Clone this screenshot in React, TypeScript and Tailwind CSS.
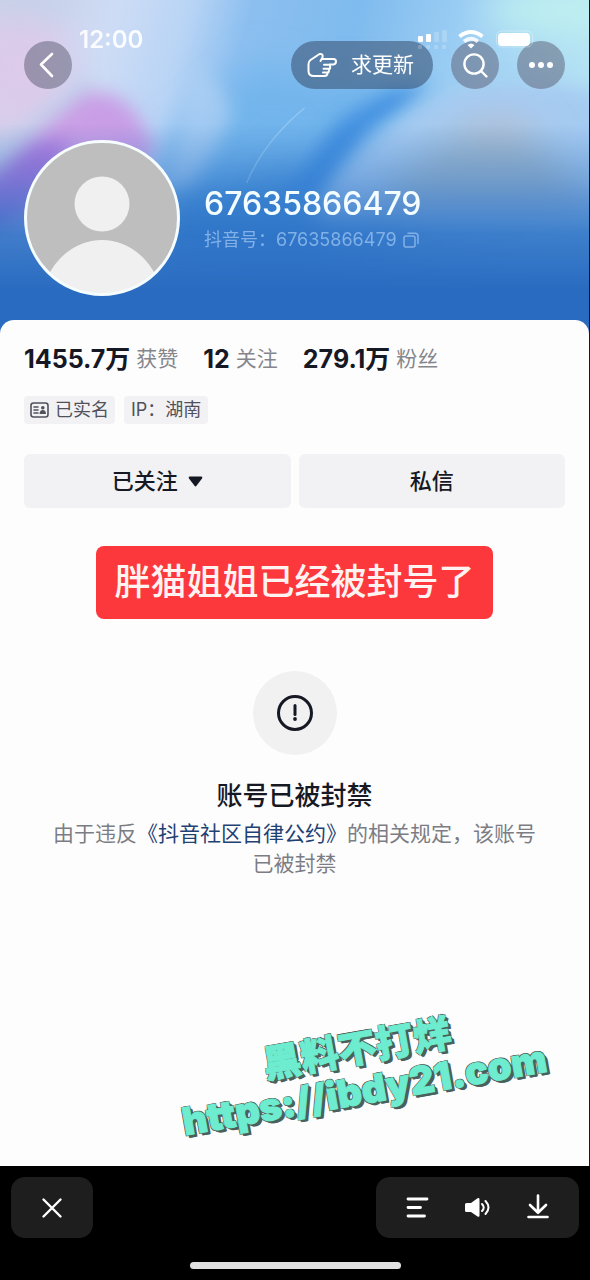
import React from "react";

const stats = [
  { value: "1455.7万", label: "获赞" },
  { value: "12", label: "关注" },
  { value: "279.1万", label: "粉丝" },
];

function CoverArt() {
  return (
    <svg
      className="absolute inset-0 h-full w-full"
      viewBox="0 0 590 344"
      preserveAspectRatio="none"
      aria-hidden="true"
    >
      <defs>
        <linearGradient id="base" x1="0" y1="0" x2="1" y2="0.15">
          <stop offset="0" stopColor="#d6cfea" />
          <stop offset="0.2" stopColor="#cddcf5" />
          <stop offset="0.32" stopColor="#b8d4f5" />
          <stop offset="0.42" stopColor="#8cbff0" />
          <stop offset="0.6" stopColor="#7fbbee" />
          <stop offset="0.8" stopColor="#9fd0f4" />
          <stop offset="1" stopColor="#b4e2f4" />
        </linearGradient>
        <linearGradient id="fade" x1="0" y1="0" x2="0" y2="1">
          <stop offset="0.36" stopColor="#2b6fc4" stopOpacity="0" />
          <stop offset="0.52" stopColor="#2b6fc4" stopOpacity="0.38" />
          <stop offset="0.68" stopColor="#2a6fc4" stopOpacity="0.86" />
          <stop offset="0.84" stopColor="#296bc0" stopOpacity="1" />
        </linearGradient>
        <filter id="soft" x="-50%" y="-50%" width="200%" height="200%">
          <feGaussianBlur stdDeviation="18" />
        </filter>
        <filter id="edge" x="-50%" y="-50%" width="200%" height="200%">
          <feGaussianBlur stdDeviation="9" />
        </filter>
      </defs>
      <rect width="590" height="344" fill="url(#base)" />
      <g filter="url(#soft)">
        <ellipse cx="20" cy="70" rx="50" ry="60" fill="#dccbea" />
        <ellipse cx="30" cy="0" rx="60" ry="14" fill="#bcd3e8" />
        <ellipse cx="575" cy="10" rx="90" ry="26" fill="#bff0f0" />
        <path d="M150 190 L170 140 L220 100 L260 60 L300 80 L420 80 L400 240 L140 240Z" fill="#72b5ec" />
        <path d="M160 250 L170 190 L300 160 L330 250Z" fill="#4a96dc" />
      </g>
      <g filter="url(#edge)">
        <path d="M-20 160 L84 78 L98 84 L20 160 L-20 190Z" fill="#bdcdea" opacity="0.8" />
        <path d="M-20 190 L20 148 L86 92 Q120 90 138 116 L156 150 L110 200 L-20 240Z" fill="#c98fe2" opacity="0.8" />
        <path d="M-20 184 L30 144 L70 140 L40 200 L-20 240Z" fill="#b078de" />
        <path d="M160 190 Q188 130 190 66 Q226 84 232 112 Q220 150 186 190Z" fill="#b0d0f4" opacity="0.7" />
        <path d="M276 200 L340 120 L390 92 L430 84 L370 130 L318 200Z" fill="#4390e0" />
      </g>
      <g filter="url(#edge)">
        <path d="M322 200 Q374 124 450 92 Q530 70 620 96 L620 220 L318 220Z" fill="#a6cbf1" />
      </g>
      <g filter="url(#soft)">
        <path d="M375 210 Q420 136 490 130 Q556 132 590 210Z" fill="#9fb8cb" />
        <ellipse cx="500" cy="128" rx="36" ry="10" fill="#b9bfd4" />
      </g>
      <path d="M247 183 Q264 142 305 108" fill="none" stroke="#a9d5f5" strokeWidth="1.500" opacity="0.55" />
      <rect width="590" height="344" fill="url(#fade)" />
    </svg>
  );
}

function StatusBar() {
  return (
    <div className="pointer-events-none absolute inset-x-0 top-7 flex h-6 items-center justify-between pl-[79px] pr-[54px] text-white">
      <time className="text-[24px] font-semibold leading-6 opacity-90">12:00</time>
      <svg width="118" height="24" viewBox="0 0 118 24" fill="#fff" aria-hidden="true">
        <rect x="1" y="8" width="5" height="6" rx="1" />
        <rect x="9" y="6" width="5" height="8" rx="1" />
        <g opacity="0.2">
          <rect x="17" y="4" width="5" height="10" rx="1" />
          <rect x="25" y="2" width="5" height="12" rx="1" />
          <rect x="1" y="17" width="4" height="4" rx="1" />
          <rect x="9" y="17" width="4" height="4" rx="1" />
          <rect x="17" y="17" width="4" height="4" rx="1" />
          <rect x="25" y="17" width="4" height="4" rx="1" />
        </g>
        <g fill="none" stroke="#fff" strokeWidth="4">
          <path d="M42.500 8.500 Q54 -0.500 65.500 8.500" />
          <path d="M47 13.500 Q54 8 61 13.500" opacity="0.85" />
        </g>
        <path d="M50.500 17 Q54 14 57.500 17 L54 20.500Z" />
        <rect x="79.500" y="3" width="36" height="16" rx="5" fill="none" stroke="#fff" opacity="0.3" />
        <rect x="81" y="5" width="32" height="13" rx="4" />
      </svg>
    </div>
  );
}

function RoundButton({ label, children }: { label: string; children: React.ReactNode }) {
  return (
    <button
      type="button"
      aria-label={label}
      className="flex size-12 items-center justify-center rounded-full bg-[#5a5c72]/50 text-white"
    >
      {children}
    </button>
  );
}

function TopBar() {
  return (
    <div className="flex items-center justify-between">
      <RoundButton label="返回">
        <svg width="28" height="28" viewBox="0 0 28 28" fill="none" stroke="currentColor" strokeWidth="2.600" strokeLinecap="round" strokeLinejoin="round">
          <path d="M18 3 L7 13.500 L18 25" />
        </svg>
      </RoundButton>
      <div className="flex items-center gap-[18px]">
        <button
          type="button"
          className="flex h-12 items-center gap-[14px] rounded-full bg-[#3d5678]/60 pl-4 pr-[19px] text-[21px] text-white"
        >
          <svg width="30" height="26" viewBox="0 0 30 26" fill="none" stroke="currentColor" strokeWidth="2" strokeLinecap="round" strokeLinejoin="round" aria-hidden="true">
            <path d="M13.500 9 L15.500 5.500 Q16.500 1.500 12.500 2 L3.500 8 Q1.500 9.500 1.500 12 V19 Q1.500 24 7 24 H17.500 Q20.500 24 20.500 21 Q22.500 20 21.800 17.500 Q23.800 16.500 23 14 V12.500 H26.500 Q29 12 29 9.500 Q29 7 26.500 7 H14.800" />
            <path d="M23 12.800 H17 M22 16.800 H16.500 M20.500 20.500 H16" />
          </svg>
          求更新
        </button>
        <RoundButton label="搜索">
          <svg width="28" height="28" viewBox="0 0 28 28" fill="none" stroke="currentColor" strokeWidth="2.400" strokeLinecap="round">
            <circle cx="13" cy="13" r="9.600" />
            <path d="M20 20 L25.500 25.500" />
          </svg>
        </RoundButton>
        <RoundButton label="更多">
          <svg width="26" height="8" viewBox="0 0 26 8" fill="currentColor">
            <circle cx="4" cy="4" r="3" />
            <circle cx="13" cy="4" r="3" />
            <circle cx="22" cy="4" r="3" />
          </svg>
        </RoundButton>
      </div>
    </div>
  );
}

function Profile() {
  return (
    <div className="mt-[51px] flex items-center gap-6">
      <svg className="size-[156px] shrink-0" viewBox="0 0 156 156" role="img" aria-label="头像">
        <defs>
          <clipPath id="face">
            <circle cx="78" cy="78" r="76" />
          </clipPath>
        </defs>
        <circle cx="78" cy="78" r="76" fill="#bebebe" />
        <g clipPath="url(#face)" fill="#f0f0f0">
          <circle cx="78" cy="64" r="27.500" />
          <path d="M22 140 C34 113 56 100 78 100 C100 100 122 113 134 140 V160 H22Z" />
        </g>
        <circle cx="78" cy="78" r="76.500" fill="none" stroke="#f5fdff" strokeWidth="3" />
      </svg>
      <div>
        <h1 className="text-[32px] font-medium leading-10 text-[#f3fcff]">67635866479</h1>
        <div className="mt-1 flex items-center gap-[6px] text-[18px] leading-6 text-[#82b1e8]">
          <p>抖音号：67635866479</p>
          <button type="button" aria-label="复制抖音号">
            <svg className="block" width="16" height="16" viewBox="0 0 16 16" fill="none" stroke="currentColor" strokeWidth="1.500" strokeLinejoin="round" strokeLinecap="round">
              <rect x="1" y="4" width="11" height="11" rx="2" />
              <path d="M5 1.200 H12 Q15 1.200 15 4.200 V11.500" />
            </svg>
          </button>
        </div>
      </div>
    </div>
  );
}

function Tags() {
  return (
    <div className="mt-[22px] flex gap-[9px] text-[18px] leading-7 text-[#50515b]">
      <span className="flex items-center gap-[6px] rounded-sm bg-[#f2f2f5] px-[6px]">
        <svg width="19" height="16" viewBox="0 0 19 16" fill="none" stroke="currentColor" strokeWidth="1.600" strokeLinecap="round" aria-hidden="true">
          <rect x="1" y="1" width="17" height="14" rx="2.500" />
          <path d="M4 5 H8 M4 8 H8 M4 11 H8" />
          <circle cx="12.800" cy="5.800" r="1.800" fill="currentColor" stroke="none" />
          <path d="M9.500 12 Q9.800 8 12.800 8 Q15.800 8 16 12Z" fill="currentColor" stroke="none" />
        </svg>
        已实名
      </span>
      <span className="rounded-sm bg-[#f2f2f5] px-[7px]">IP：湖南</span>
    </div>
  );
}

function Notice() {
  return (
    <section className="mt-[52px] flex flex-col items-center text-center">
      <div className="flex size-[84px] items-center justify-center rounded-full bg-[#f1f1f2]">
        <svg width="38" height="38" viewBox="0 0 38 38" fill="none" stroke="#161823" strokeWidth="3" strokeLinecap="round" aria-hidden="true">
          <circle cx="19" cy="19" r="16.500" />
          <path d="M19 11.500 V20.500" />
          <circle cx="19" cy="25" r="1.900" fill="#161823" stroke="none" />
        </svg>
      </div>
      <h2 className="mt-[21px] text-[26px] font-medium leading-10 text-[#161823]">账号已被封禁</h2>
      <p className="mt-[3px] px-6 text-[21px] leading-[30px] text-[#7c7d84]">
        由于违反
        <a href="#rules" className="text-[#1f4173]">《抖音社区自律公约》</a>
        的相关规定，该账号已被封禁
      </p>
    </section>
  );
}

function Watermark() {
  return (
    <div className="pointer-events-none mt-[148px] flex justify-center pl-[132px]">
      <div className="-rotate-[10deg] whitespace-nowrap text-center text-[38px] font-black leading-[42px] text-[#6eecd0] [-webkit-text-stroke:1px_#6eecd0] [text-shadow:-1px_-1px_0_#4b5f5b,1px_-1px_0_#4b5f5b,-1px_1px_0_#4b5f5b,1px_1px_0_#4b5f5b,2px_2px_0_#4b5f5b,2px_3px_0_#4b5f5b,3px_3px_0_#4b5f5b]">
        <p>黑料不打烊</p>
        <p>https://ibdy21.com</p>
      </div>
    </div>
  );
}

function PlayerBar() {
  return (
    <footer className="bg-black px-[11px] pb-[11px] pt-[11px] text-white">
      <div className="flex justify-between">
        <button type="button" aria-label="关闭" className="flex h-[61px] w-[82px] items-center justify-center rounded-[14px] bg-[#1e1e1e]">
          <svg width="22" height="22" viewBox="0 0 22 22" fill="none" stroke="currentColor" strokeWidth="2.400" strokeLinecap="round">
            <path d="M2.500 2.500 L19.500 19.500 M19.500 2.500 L2.500 19.500" />
          </svg>
        </button>
        <div className="flex h-[61px] items-center gap-8 rounded-[14px] bg-[#1e1e1e] pl-[27px] pr-7">
          <button type="button" aria-label="列表">
            <svg className="block" width="28" height="28" viewBox="0 0 28 28" fill="none" stroke="currentColor" strokeWidth="2.800" strokeLinecap="round">
              <path d="M5 5 H24 M5 13.500 H17.500 M5 22 H21.500" />
            </svg>
          </button>
          <button type="button" aria-label="声音">
            <svg className="block" width="28" height="28" viewBox="0 0 28 28" fill="currentColor">
              <path d="M3.500 9 H8 L14.500 4.300 Q16.500 3.500 16.500 5.500 V21.500 Q16.500 23.500 14.500 22.500 L8 18 H3.500 Q2 18 2 16.500 V10.500 Q2 9 3.500 9Z" />
              <path d="M19 10 Q22.500 13.500 19 17 M22.500 7 Q28.500 13.500 22.500 20" fill="none" stroke="currentColor" strokeWidth="2" strokeLinecap="round" />
            </svg>
          </button>
          <button type="button" aria-label="下载">
            <svg className="block" width="28" height="28" viewBox="0 0 28 28" fill="none" stroke="currentColor" strokeWidth="2.600" strokeLinecap="round" strokeLinejoin="round">
              <path d="M15 1.500 V18.500 M7 11 L15 18.800 L23 11 M5.500 23 H24.500" />
            </svg>
          </button>
        </div>
      </div>
      <div className="mx-auto mt-6 h-[7px] w-[211px] rounded-full bg-[#e2e2e2]" />
    </footer>
  );
}

export default function App() {
  return (
    <div className="flex min-h-screen flex-col bg-black font-[Inter,'Noto_Sans_CJK_SC',sans-serif]">
      <main className="flex grow flex-col border-r border-[#101b33]">
        <header className="relative bg-[#296bc0]">
          <CoverArt />
          <div className="relative px-6 pb-12 pt-[41px]">
            <TopBar />
            <Profile />
          </div>
          <StatusBar />
        </header>
        <div className="relative -mt-6 grow rounded-t-[14px] bg-[#fdfdfe] px-6 pt-6">
          <ul className="flex gap-[25px] leading-[30px]">
            {stats.map((s) => (
              <li key={s.label} className="flex items-center gap-[6px]">
                <strong className="text-[25px] font-bold text-[#161823]">{s.value}</strong>
                <span className="text-[21px] text-[#85868c]">{s.label}</span>
              </li>
            ))}
          </ul>
          <Tags />
          <div className="mt-[30px] grid grid-cols-2 gap-2 text-[22px] font-medium text-[#161823]">
            <button type="button" className="flex h-[54px] items-center justify-center gap-[10px] rounded-md bg-[#f2f2f5]">
              已关注
              <svg width="15" height="11" viewBox="0 0 15 11" fill="currentColor" aria-hidden="true">
                <path d="M1.500 0.500 H13.500 Q15 1 14 2.500 L8.500 9.800 Q7.500 11 6.500 9.800 L1 2.500 Q0 1 1.500 0.500Z" />
              </svg>
            </button>
            <button type="button" className="h-[54px] rounded-md bg-[#f2f2f5]">私信</button>
          </div>
          <p className="mx-auto mt-[38px] w-fit rounded-lg bg-[#fd383d] px-[18px] pb-[13px] pt-3 text-[36px] font-medium leading-[48px] text-[#fff3f1]">
            胖猫姐姐已经被封号了
          </p>
          <Notice />
          <Watermark />
        </div>
      </main>
      <PlayerBar />
    </div>
  );
}
